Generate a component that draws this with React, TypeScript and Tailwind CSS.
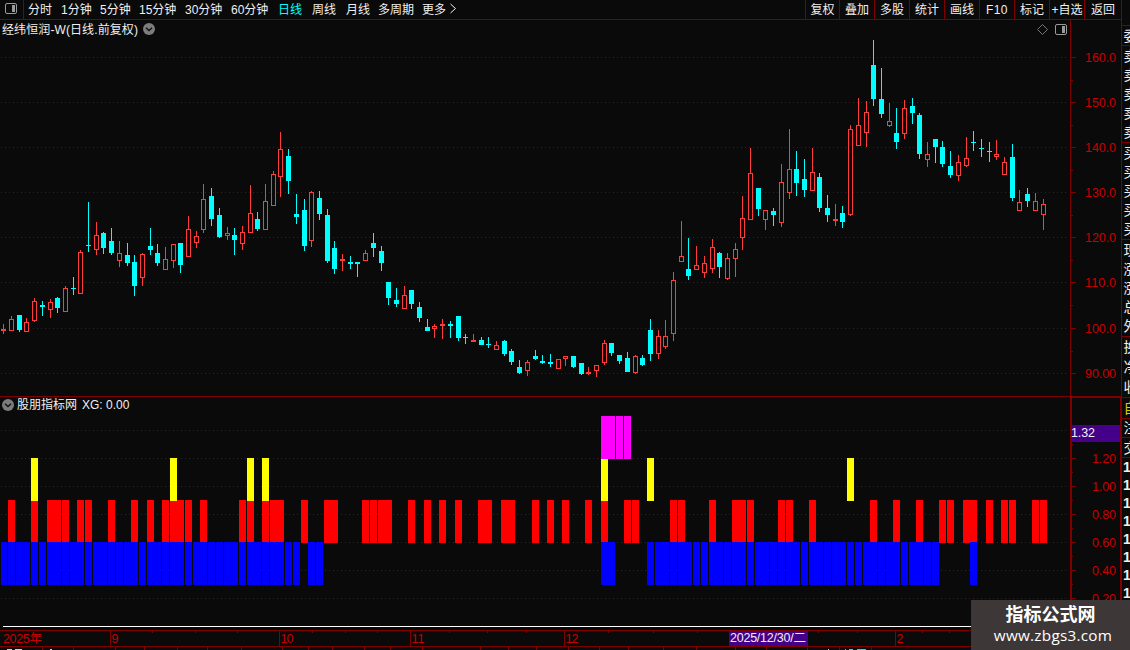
import React from "react";

type Candle = [kind: "r" | "c", high: number, top: number, bottom: number, low: number];

// r = rising (hollow), c = falling (solid)
const CANDLES: Candle[] = [
  ["r", 324, 329, 331, 334], ["r", 316, 319, 331, 331], ["c", 315, 315, 330, 332], ["r", 318, 322, 332, 332],
  ["r", 298, 301, 321, 322], ["c", 301, 305, 307, 316], ["r", 299, 302, 310, 318], ["c", 297, 298, 308, 313],
  ["r", 286, 288, 312, 312], ["c", 277, 288, 289, 295], ["r", 250, 252, 294, 294], ["c", 202, 245, 246, 252],
  ["r", 222, 235, 250, 255], ["c", 232, 233, 248, 254], ["c", 228, 241, 253, 255], ["r", 241, 253, 261, 267],
  ["c", 243, 255, 263, 266], ["c", 255, 262, 286, 296], ["r", 253, 254, 278, 286], ["c", 228, 246, 250, 255],
  ["c", 244, 253, 263, 266], ["r", 247, 259, 270, 270], ["r", 244, 244, 261, 268], ["c", 243, 243, 265, 273],
  ["r", 216, 229, 257, 257], ["r", 231, 236, 243, 248], ["r", 184, 199, 230, 233], ["c", 188, 196, 219, 226],
  ["c", 208, 215, 237, 238], ["r", 227, 233, 236, 240], ["c", 228, 235, 240, 255], ["r", 226, 232, 244, 250],
  ["r", 185, 213, 233, 233], ["c", 212, 219, 229, 231], ["r", 184, 201, 230, 230], ["r", 171, 174, 206, 206],
  ["r", 132, 149, 177, 197], ["c", 149, 156, 181, 194], ["c", 194, 214, 217, 224], ["c", 199, 210, 246, 251],
  ["r", 191, 192, 241, 247], ["c", 191, 198, 214, 220], ["c", 209, 215, 261, 263], ["c", 241, 248, 269, 274],
  ["r", 254, 259, 261, 271], ["c", 256, 262, 264, 269], ["c", 262, 262, 264, 277], ["r", 250, 253, 261, 261],
  ["c", 233, 243, 248, 257], ["c", 246, 251, 263, 271], ["c", 282, 282, 298, 305], ["c", 288, 300, 304, 307],
  ["r", 286, 295, 309, 309], ["c", 290, 290, 304, 309], ["c", 302, 307, 318, 322], ["c", 319, 327, 331, 331],
  ["r", 324, 326, 329, 338], ["r", 319, 324, 326, 339], ["c", 321, 324, 326, 338], ["c", 316, 316, 338, 341],
  ["c", 334, 337, 338, 344], ["r", 334, 340, 342, 342], ["c", 337, 340, 345, 345], ["c", 337, 344, 345, 348],
  ["r", 341, 345, 350, 350], ["c", 340, 341, 354, 356], ["c", 349, 351, 362, 365], ["c", 360, 367, 373, 374],
  ["r", 360, 362, 371, 376], ["c", 350, 356, 359, 360], ["c", 355, 361, 363, 364], ["c", 354, 362, 364, 367],
  ["r", 359, 359, 369, 369], ["r", 356, 356, 359, 366], ["c", 356, 356, 367, 368], ["c", 363, 363, 374, 375],
  ["r", 367, 372, 374, 375], ["r", 365, 365, 371, 377], ["r", 340, 343, 363, 365], ["c", 343, 343, 353, 356],
  ["c", 355, 355, 361, 364], ["c", 352, 358, 372, 372], ["r", 355, 356, 373, 374], ["c", 355, 358, 365, 366],
  ["c", 319, 330, 354, 361], ["r", 330, 336, 354, 359], ["r", 320, 336, 347, 349], ["r", 272, 280, 334, 341],
  ["r", 221, 256, 262, 262], ["c", 238, 269, 276, 280], ["r", 246, 265, 270, 270], ["r", 256, 263, 273, 278],
  ["r", 239, 247, 269, 273], ["c", 252, 253, 267, 278], ["r", 253, 258, 279, 280], ["r", 243, 249, 259, 277],
  ["r", 196, 218, 238, 250], ["r", 148, 173, 220, 220], ["c", 188, 188, 209, 216], ["r", 210, 210, 220, 230],
  ["c", 208, 211, 215, 226], ["r", 164, 182, 223, 227], ["r", 129, 169, 193, 199], ["c", 151, 169, 183, 196],
  ["c", 159, 179, 190, 197], ["r", 148, 172, 191, 191], ["c", 173, 177, 208, 212], ["c", 195, 208, 215, 222],
  ["r", 204, 219, 221, 226], ["c", 206, 213, 222, 228], ["r", 125, 129, 215, 216], ["r", 98, 125, 146, 146],
  ["r", 101, 112, 133, 147], ["c", 40, 65, 99, 106], ["c", 68, 99, 114, 118], ["r", 103, 121, 126, 127],
  ["c", 108, 133, 142, 149], ["r", 100, 108, 134, 139], ["c", 98, 106, 113, 124], ["c", 113, 115, 154, 159],
  ["r", 142, 154, 160, 167], ["c", 139, 139, 147, 163], ["c", 141, 147, 164, 167], ["c", 151, 166, 175, 178],
  ["r", 155, 162, 176, 181], ["r", 137, 158, 166, 167], ["c", 131, 142, 143, 151], ["c", 139, 148, 149, 157],
  ["c", 142, 151, 152, 162], ["r", 140, 154, 157, 160], ["r", 157, 162, 175, 175], ["c", 144, 157, 198, 201],
  ["r", 190, 202, 211, 211], ["c", 188, 194, 201, 207], ["r", 193, 201, 211, 211], ["r", 199, 204, 215, 230],
];

const range = (from: number, to: number) => Array.from({ length: to - from + 1 }, (_, i) => from + i);

const RED_BARS = [
  1, 4, 6, 7, 8, 10, 11, 14, 17, 19, 21, 22, 23, 24, 26, 31, 32, 34, 35, 36, 39, 42, 43, 47, 48, 49, 50, 53, 55, 57,
  59, 62, 63, 65, 66, 69, 71, 73, 76, 78, 81, 82, 87, 88, 92, 95, 96, 97, 101, 102, 105, 113, 116, 119, 122, 123,
  125, 126, 128, 130, 131, 134, 135,
];

const BARS = [
  { fill: "#ff0000", y: 500, h: 43, at: RED_BARS },
  { fill: "#0000ff", y: 542, h: 43, at: [...range(0, 38), 40, 41, 78, 79, ...range(84, 121), 126] },
  { fill: "#ffff00", y: 458, h: 43, at: [4, 22, 32, 34, 78, 84, 110] },
  { fill: "#ff00ff", y: 416, h: 43, at: [78, 79, 80, 81] },
];

const PRICES = [
  { y: 57, label: "160.0" },
  { y: 102, label: "150.0" },
  { y: 147, label: "140.0" },
  { y: 192, label: "130.0" },
  { y: 237, label: "120.0" },
  { y: 282, label: "110.0" },
  { y: 328, label: "100.0" },
  { y: 373, label: "90.00" },
];

const LEVELS = [
  { y: 458, label: "1.20" },
  { y: 486, label: "1.00" },
  { y: 514, label: "0.80" },
  { y: 542, label: "0.60" },
  { y: 570, label: "0.40" },
  { y: 598, label: "0.20" },
];

const MINOR_TICKS = [80, 125, 170, 215, 260, 305, 351, 444, 472, 500, 528, 556, 584];
const GRID = [...PRICES.map((p) => p.y), 430, ...LEVELS.map((l) => l.y)];

const MONTHS = [
  { x: 110, label: "9", w: 6 },
  { x: 279, label: "10", w: 13 },
  { x: 410, label: "11", w: 13 },
  { x: 564, label: "12", w: 13 },
  { x: 895, label: "2", w: 6 },
];
const WEEK_TICKS = [152, 195, 237, 312, 345, 377, 449, 487, 526, 608, 653, 697, 818, 857, 922, 949];
const FOOT_TICKS = [
  42, 73, 115, 144, 177, 207, 241, 282, 308, 332, 364, 390, 422, 480, 508, 536, 568, 599, 628, 663, 696, 735, 766,
  807, 839, 871,
];

const PERIODS = [
  { label: "分时", cls: "w-[33px]" },
  { label: "1分钟", cls: "w-[39px]" },
  { label: "5分钟", cls: "w-[39px]" },
  { label: "15分钟", cls: "w-[46px]" },
  { label: "30分钟", cls: "w-[46px]" },
  { label: "60分钟", cls: "w-[47px]" },
  { label: "日线", cls: "w-[34px] text-[#00ffff]" },
  { label: "周线", cls: "w-[34px]" },
  { label: "月线", cls: "w-[32px]" },
  { label: "多周期", cls: "w-[44px]" },
  { label: "更多", cls: "w-[27px]" },
];

const TOOLS = [
  { label: "复权", cls: "w-[34px]" },
  { label: "叠加", cls: "w-[35px]" },
  { label: "多股", cls: "w-[35px]" },
  { label: "统计", cls: "w-[35px]" },
  { label: "画线", cls: "w-[35px]" },
  { label: "F10", cls: "w-[35px] tracking-[0.4px]" },
  { label: "标记", cls: "w-[35px]" },
  { label: "+自选", cls: "w-[35px]" },
  { label: "返回", cls: "w-[37px]" },
];

const QUOTES = [
  { rows: "", cls: "h-[26px]" },
  { rows: "委", cls: "h-5" },
  { rows: "卖卖卖卖卖", cls: "h-[97px]" },
  { rows: "买买买买买", cls: "h-[97px]" },
  { rows: "现涨涨总外", cls: "h-[97px]" },
  { rows: "换净收", cls: "h-[61px]" },
  { rows: "自", cls: "h-[21px] text-[#d0d000]" },
  { rows: "注", cls: "h-[19px]" },
  { rows: "交", cls: "h-5" },
];

const barX = (i: number) => Math.floor(3.84 + i * 7.698);

function PanelIcon() {
  return (
    <svg width="12" height="11" viewBox="0 0 12 11" className="block">
      <rect x="0.5" y="0.5" width="11" height="10" rx="1.5" fill="none" stroke="#9a9a9a" />
      <rect x="7" y="2" width="3" height="7" fill="#9a9a9a" />
    </svg>
  );
}

function DropIcon() {
  return (
    <svg width="12" height="12" viewBox="0 0 12 12" className="block">
      <circle cx="6" cy="6" r="6" fill="#7c7c7c" />
      <path d="M3 4.7 L6 7.5 L9 4.7" fill="none" stroke="#111" strokeWidth="1.4" />
    </svg>
  );
}

function Toolbar() {
  return (
    <header className="flex h-5 w-[1121px] shrink-0 border-b border-[#800000] leading-5">
      <div className="flex w-6 items-start border-r border-[#800000] pl-[5px] pt-[3px]">
        <PanelIcon />
      </div>
      <nav className="flex pl-1">
        {PERIODS.map((p) => (
          <span key={p.label} className={`shrink-0 whitespace-nowrap ${p.cls}`}>
            {p.label}
          </span>
        ))}
        <svg width="8" height="11" viewBox="0 0 8 11" className="mt-[3px]">
          <path d="M1.5 1 L6.5 5.5 L1.5 10" fill="none" stroke="#f0f0f0" />
        </svg>
      </nav>
      <div className="ml-auto flex">
        {TOOLS.map((t) => (
          <span key={t.label} className={`border-l border-[#800000] whitespace-nowrap text-center ${t.cls}`}>
            {t.label}
          </span>
        ))}
      </div>
    </header>
  );
}

function Chart() {
  return (
    <svg width="1122" height="630" viewBox="0 20 1122 630" shapeRendering="crispEdges" className="block">
      {GRID.map((y) => (
        <line key={y} x1="1" x2="1067" y1={y + 0.5} y2={y + 0.5} stroke="#800000" strokeDasharray="1 3" />
      ))}

      {CANDLES.map(([kind, high, top, bottom, low], i) => {
        const x = barX(i);
        const color = kind === "r" ? "#ff3c3c" : "#00ffff";
        return (
          <g key={i}>
            <rect x={x} y={high} width="1" height={low - high} fill={color} />
            <rect x={x - 2} y={top} width="5" height={bottom - top} fill={color} />
            {kind === "r" && bottom - top > 2 && (
              <rect x={x - 1} y={top + 1} width="3" height={bottom - top - 2} fill="#0a0a0a" />
            )}
          </g>
        );
      })}

      {BARS.map((b) =>
        b.at.map((i) => {
          const left = Math.max(1, barX(i) - 3);
          return <rect key={`${b.fill}${i}`} x={left} y={b.y} width={barX(i) + 4 - left} height={b.h} fill={b.fill} />;
        })
      )}
      <rect x="3" y="626" width="1067" height="1" fill="#ffffff" />

      {/* frame and scale lines */}
      <g fill="#800000">
        <rect x="0" y="396" width="1122" height="1" />
        <rect x="1070" y="396" width="52" height="2" />
        <rect x="1070" y="20" width="1" height="630" />
        <rect x="1070" y="396" width="2" height="254" />
        <rect x="1120" y="396" width="2" height="254" />
        <rect x="0" y="630" width="1122" height="1" />
        <rect x="0" y="646" width="1122" height="1" />
        {[...PRICES, ...LEVELS].map((p) => (
          <rect key={p.y} x="1071" y={p.y} width="5" height="1" />
        ))}
        {MINOR_TICKS.map((y) => (
          <rect key={y} x="1071" y={y} width="2" height="1" />
        ))}
        {MONTHS.map((m) => (
          <rect key={m.x} x={m.x} y="631" width="1" height="15" />
        ))}
        {WEEK_TICKS.map((x) => (
          <rect key={x} x={x} y="631" width="1" height="2" />
        ))}
        {FOOT_TICKS.map((x) => (
          <rect key={x} x={x} y="647" width="1" height="3" />
        ))}
      </g>

      <g fill="#c80000" fontSize="12.5">
        {PRICES.map((p) => (
          <text key={p.y} x="1085" y={p.y + 5} textLength="31">
            {p.label}
          </text>
        ))}
        {LEVELS.map((l) => (
          <text key={l.y} x="1092" y={l.y + 5} textLength="24">
            {l.label}
          </text>
        ))}
        <text x="3" y="643" textLength="39">
          2025年
        </text>
        {MONTHS.map((m) => (
          <text key={m.x} x={m.x + 1.5} y="643" textLength={m.w}>
            {m.label}
          </text>
        ))}
      </g>

      <rect x="1072" y="425" width="48" height="16" fill="#440088" />
      <rect x="1072" y="425" width="48" height="1" fill="#800000" />
      <rect x="1072" y="441" width="48" height="1" fill="#800000" />
      <text x="1071" y="437" textLength="24" fontSize="12.5" fill="#f0f0f0">
        1.32
      </text>

      <rect x="729" y="631" width="79" height="15" fill="#440088" />
      <rect x="729" y="631" width="1" height="15" fill="#800000" />
      <rect x="807" y="631" width="1" height="15" fill="#800000" />
      <text x="730" y="642" textLength="76" fontSize="12.5" fill="#f0f0f0">
        2025/12/30/二
      </text>

      {/* tops of the index ticker cut off by the window edge */}
      <g fill="#d0d0d0">
        <rect x="7" y="649" width="5" height="1" />
        <rect x="15" y="649" width="7" height="1" />
        <rect x="50" y="649" width="2" height="1" />
        <rect x="828" y="649" width="1" height="1" />
      </g>
      <g fill="#35d0d0">
        <rect x="845" y="649" width="1" height="1" />
        <rect x="849" y="649" width="4" height="1" />
        <rect x="857" y="649" width="9" height="1" />
      </g>
    </svg>
  );
}

function QuoteStrip() {
  return (
    <aside className="flex w-[9px] shrink-0 flex-col overflow-hidden border-l border-[#800000] text-[14px]">
      {QUOTES.map((q, i) => (
        <div key={i} className={`flex shrink-0 flex-col justify-around border-b border-[#800000] leading-[18px] ${q.cls}`}>
          {q.rows.split("").map((ch, j) => (
            <span key={j} className="ml-[1.5px] w-4">
              {ch}
            </span>
          ))}
        </div>
      ))}
      {range(0, 7).map((i) => (
        <span key={i} className="h-[18px] shrink-0 pl-px font-bold leading-[18px]">
          1
        </span>
      ))}
    </aside>
  );
}

export default function App() {
  return (
    <div className="relative flex h-[650px] w-[1130px] overflow-hidden bg-[#0a0a0a] font-['Liberation_Sans','Noto_Sans_CJK_SC',sans-serif] text-[12px] text-[#f0f0f0]">
      <main className="relative flex w-[1121px] shrink-0 flex-col">
        <Toolbar />
        <Chart />
        <div className="absolute left-[2px] top-5 flex h-[18px] items-center gap-[5px]">
          <span className="w-[136px] whitespace-nowrap pt-px tracking-[0.1px]">经纬恒润-W(日线.前复权)</span>
          <DropIcon />
        </div>
        <div className="absolute left-[1037px] top-6 flex items-center gap-[7px]">
          <svg width="11" height="11" viewBox="0 0 11 11">
            <path d="M5.5 0.5 L10.5 5.5 L5.5 10.5 L0.5 5.5 Z" fill="none" stroke="#777" />
          </svg>
          <PanelIcon />
        </div>
        <div className="absolute left-[2px] top-[396px] flex h-[18px] items-center">
          <DropIcon />
          <span className="ml-[3px]">股朋指标网</span>
          <span className="ml-[5px] whitespace-nowrap">XG: 0.00</span>
        </div>
      </main>
      <QuoteStrip />
      <div className="absolute bottom-0 right-0 flex h-[50px] w-[159px] flex-col items-center bg-[#3d3737] text-white">
        <span className="mt-[5px] text-[18px] font-bold leading-[21px]">指标公式网</span>
        <span className="mr-[-5px] font-['Open_Sans',sans-serif] text-[15.3px] leading-[19px] tracking-[0.25px]">
          www.zbgs3.com
        </span>
      </div>
    </div>
  );
}
